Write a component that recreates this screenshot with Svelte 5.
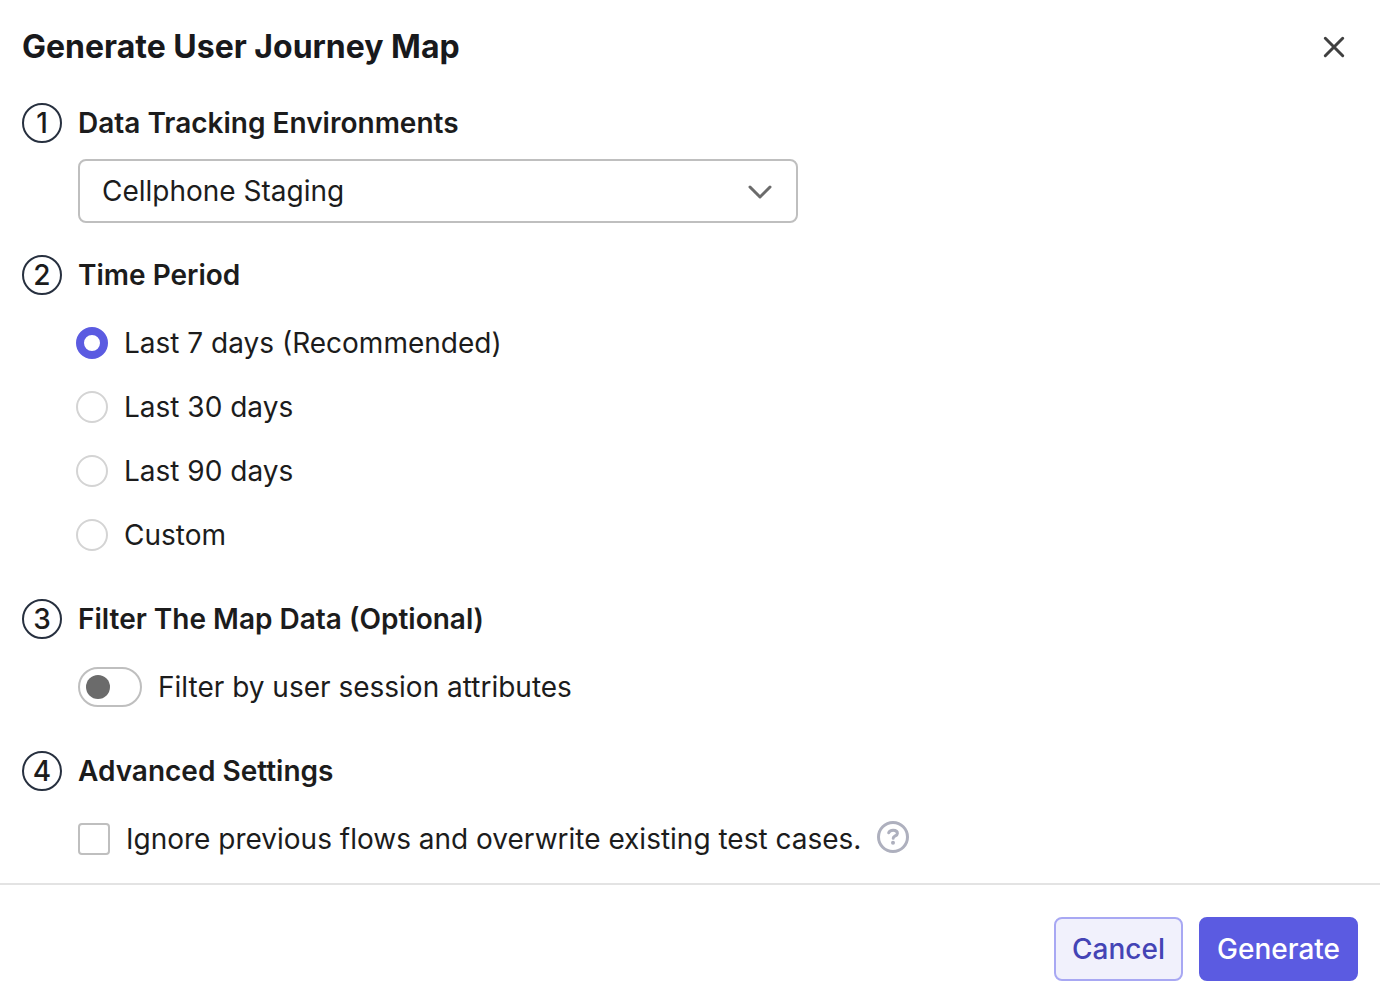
<script>
    const environments = ["Cellphone Staging"];
    const periods = [
        { value: "7", label: "Last 7 days (Recommended)" },
        { value: "30", label: "Last 30 days" },
        { value: "90", label: "Last 90 days" },
        { value: "custom", label: "Custom" },
    ];

    let environment = $state(environments[0]);
    let period = $state("7");
    let filterSessions = $state(false);
    let overwrite = $state(false);
</script>

{#snippet heading(number, title, id)}
    <div class="heading">
        <span class="number">{number}</span>
        <h2 {id}>{title}</h2>
    </div>
{/snippet}

<form class="dialog" onsubmit={(e) => e.preventDefault()}>
    <header>
        <h1>Generate User Journey Map</h1>
        <button type="button" class="close" aria-label="Close">
            <svg width="24" height="24" viewBox="0 0 24 24">
                <path d="M3.3 3.3L20.7 20.7M20.7 3.3L3.3 20.7" />
            </svg>
        </button>
    </header>

    <section>
        {@render heading(1, "Data Tracking Environments", "environment-title")}
        <div class="select">
            <select bind:value={environment} aria-labelledby="environment-title">
                {#each environments as env}
                    <option value={env}>{env}</option>
                {/each}
            </select>
            <svg width="28" height="28" viewBox="0 0 28 28">
                <path d="M4 9L14 19L24 9" />
            </svg>
        </div>
    </section>

    <section>
        {@render heading(2, "Time Period", "period-title")}
        <div class="periods" role="radiogroup" aria-labelledby="period-title">
            {#each periods as p}
                <label>
                    <input type="radio" name="period" value={p.value} bind:group={period} />
                    {p.label}
                </label>
            {/each}
        </div>
    </section>

    <section>
        {@render heading(3, "Filter The Map Data (Optional)", "filter-title")}
        <div class="option">
            <label>
                <input type="checkbox" class="switch" role="switch" bind:checked={filterSessions} />
                Filter by user session attributes
            </label>
        </div>
    </section>

    <section>
        {@render heading(4, "Advanced Settings", "advanced-title")}
        <div class="option">
            <label>
                <input type="checkbox" class="box" bind:checked={overwrite} />
                Ignore previous flows and overwrite existing test cases.
            </label>
            <button type="button" class="help" aria-label="Help">
                <svg width="32" height="32" viewBox="0 0 32 32">
                    <circle cx="16" cy="16" r="14.5" />
                    <path d="M11.7 11.8C12.3 10.1 14 9.3 16.1 9.3C18.6 9.3 20.4 10.5 20.4 12.4C20.4 14.9 16.2 14.8 16.2 17.2" />
                    <circle class="dot" cx="16" cy="21.8" r="2" />
                </svg>
            </button>
        </div>
    </section>

    <footer>
        <button type="button" class="cancel">Cancel</button>
        <button type="submit" class="generate">Generate</button>
    </footer>
</form>

<style>
    :global(body) {
        background-color: #fff;
    }
    .dialog {
        color: #1c1c1c;
        font-family: Inter, "Liberation Sans", sans-serif;
        font-size: 28px;
        font-optical-sizing: none;
        line-height: 40px;
    }
    button,
    select {
        font: inherit;
        font-optical-sizing: inherit;
        color: inherit;
        margin: 0;
        cursor: pointer;
    }
    svg {
        display: block;
        fill: none;
        stroke-linecap: round;
        stroke-linejoin: round;
    }
    header {
        display: flex;
        justify-content: space-between;
        align-items: center;
        padding: 23px 34px 32px 22px;
    }
    h1 {
        margin: 0;
        color: #18191c;
        font-size: 32px;
        font-weight: 700;
        line-height: 48px;
    }
    .close {
        padding: 0;
        border: none;
        background: none;
    }
    .close svg {
        stroke: #404040;
        stroke-width: 3;
    }
    section {
        padding: 0 22px;
        margin-bottom: 32px;
    }
    .heading {
        display: flex;
        align-items: center;
        gap: 16px;
    }
    .number {
        width: 40px;
        height: 40px;
        box-sizing: border-box;
        border: 2px solid #27303f;
        border-radius: 50%;
        font-weight: 500;
        line-height: 36px;
        text-align: center;
    }
    h2 {
        margin: 0;
        font-size: 28px;
        font-weight: 600;
    }
    .select {
        position: relative;
        max-width: 720px;
        margin: 16px 0 0 56px;
    }
    select {
        display: block;
        width: 100%;
        height: 64px;
        padding: 0 64px 0 22px;
        border: 2px solid #bfbfbf;
        border-radius: 8px;
        background-color: #fff;
        appearance: none;
    }
    .select svg {
        position: absolute;
        right: 24px;
        top: 19px;
        stroke: #6b6b6b;
        stroke-width: 3;
        pointer-events: none;
    }
    label {
        display: flex;
        align-items: center;
        gap: 16px;
        cursor: pointer;
    }
    input {
        flex: none;
        box-sizing: border-box;
        width: 32px;
        height: 32px;
        margin: 0;
        border: 2px solid #bfbfbf;
        background-color: #fff;
        appearance: none;
        cursor: pointer;
    }
    .periods {
        display: grid;
        gap: 24px;
        margin: 28px 0 44px 54px;
    }
    .periods input {
        border-color: #d4d4d4;
        border-radius: 50%;
    }
    .periods input:checked {
        border: 8px solid #5b5be1;
    }
    .option {
        display: flex;
        gap: 16px;
        margin: 28px 0 44px 56px;
    }
    .switch {
        width: 64px;
        height: 40px;
        padding: 6px;
        border-radius: 20px;
    }
    .switch::before {
        content: "";
        display: block;
        width: 24px;
        height: 24px;
        border-radius: 50%;
        background-color: #6b6b6b;
    }
    .switch:checked::before {
        margin-left: auto;
        background-color: #5b5be1;
    }
    .box {
        border-radius: 4px;
    }
    .box:checked {
        border-color: #5b5be1;
        background-color: #5b5be1;
    }
    .help {
        align-self: flex-start;
        padding: 2px 0 0;
        border: none;
        background: none;
    }
    .help svg {
        stroke: #aeb0be;
        stroke-width: 3;
    }
    .help .dot {
        fill: #aeb0be;
        stroke: none;
    }
    section:last-of-type {
        margin-bottom: 24px;
    }
    section:last-of-type .option {
        margin-bottom: 0;
    }
    footer {
        display: flex;
        justify-content: flex-end;
        gap: 16px;
        padding: 32px 22px 21px;
        border-top: 2px solid #e3e3e3;
    }
    footer button {
        height: 64px;
        padding: 0 16px;
        border: 2px solid #5b5be1;
        border-radius: 8px;
        font-weight: 500;
    }
    .cancel {
        border-color: #a8a8f3;
        background-color: #f1f1fc;
        color: #4444b5;
    }
    .generate {
        background-color: #5b5be1;
        color: #fff;
    }
</style>
